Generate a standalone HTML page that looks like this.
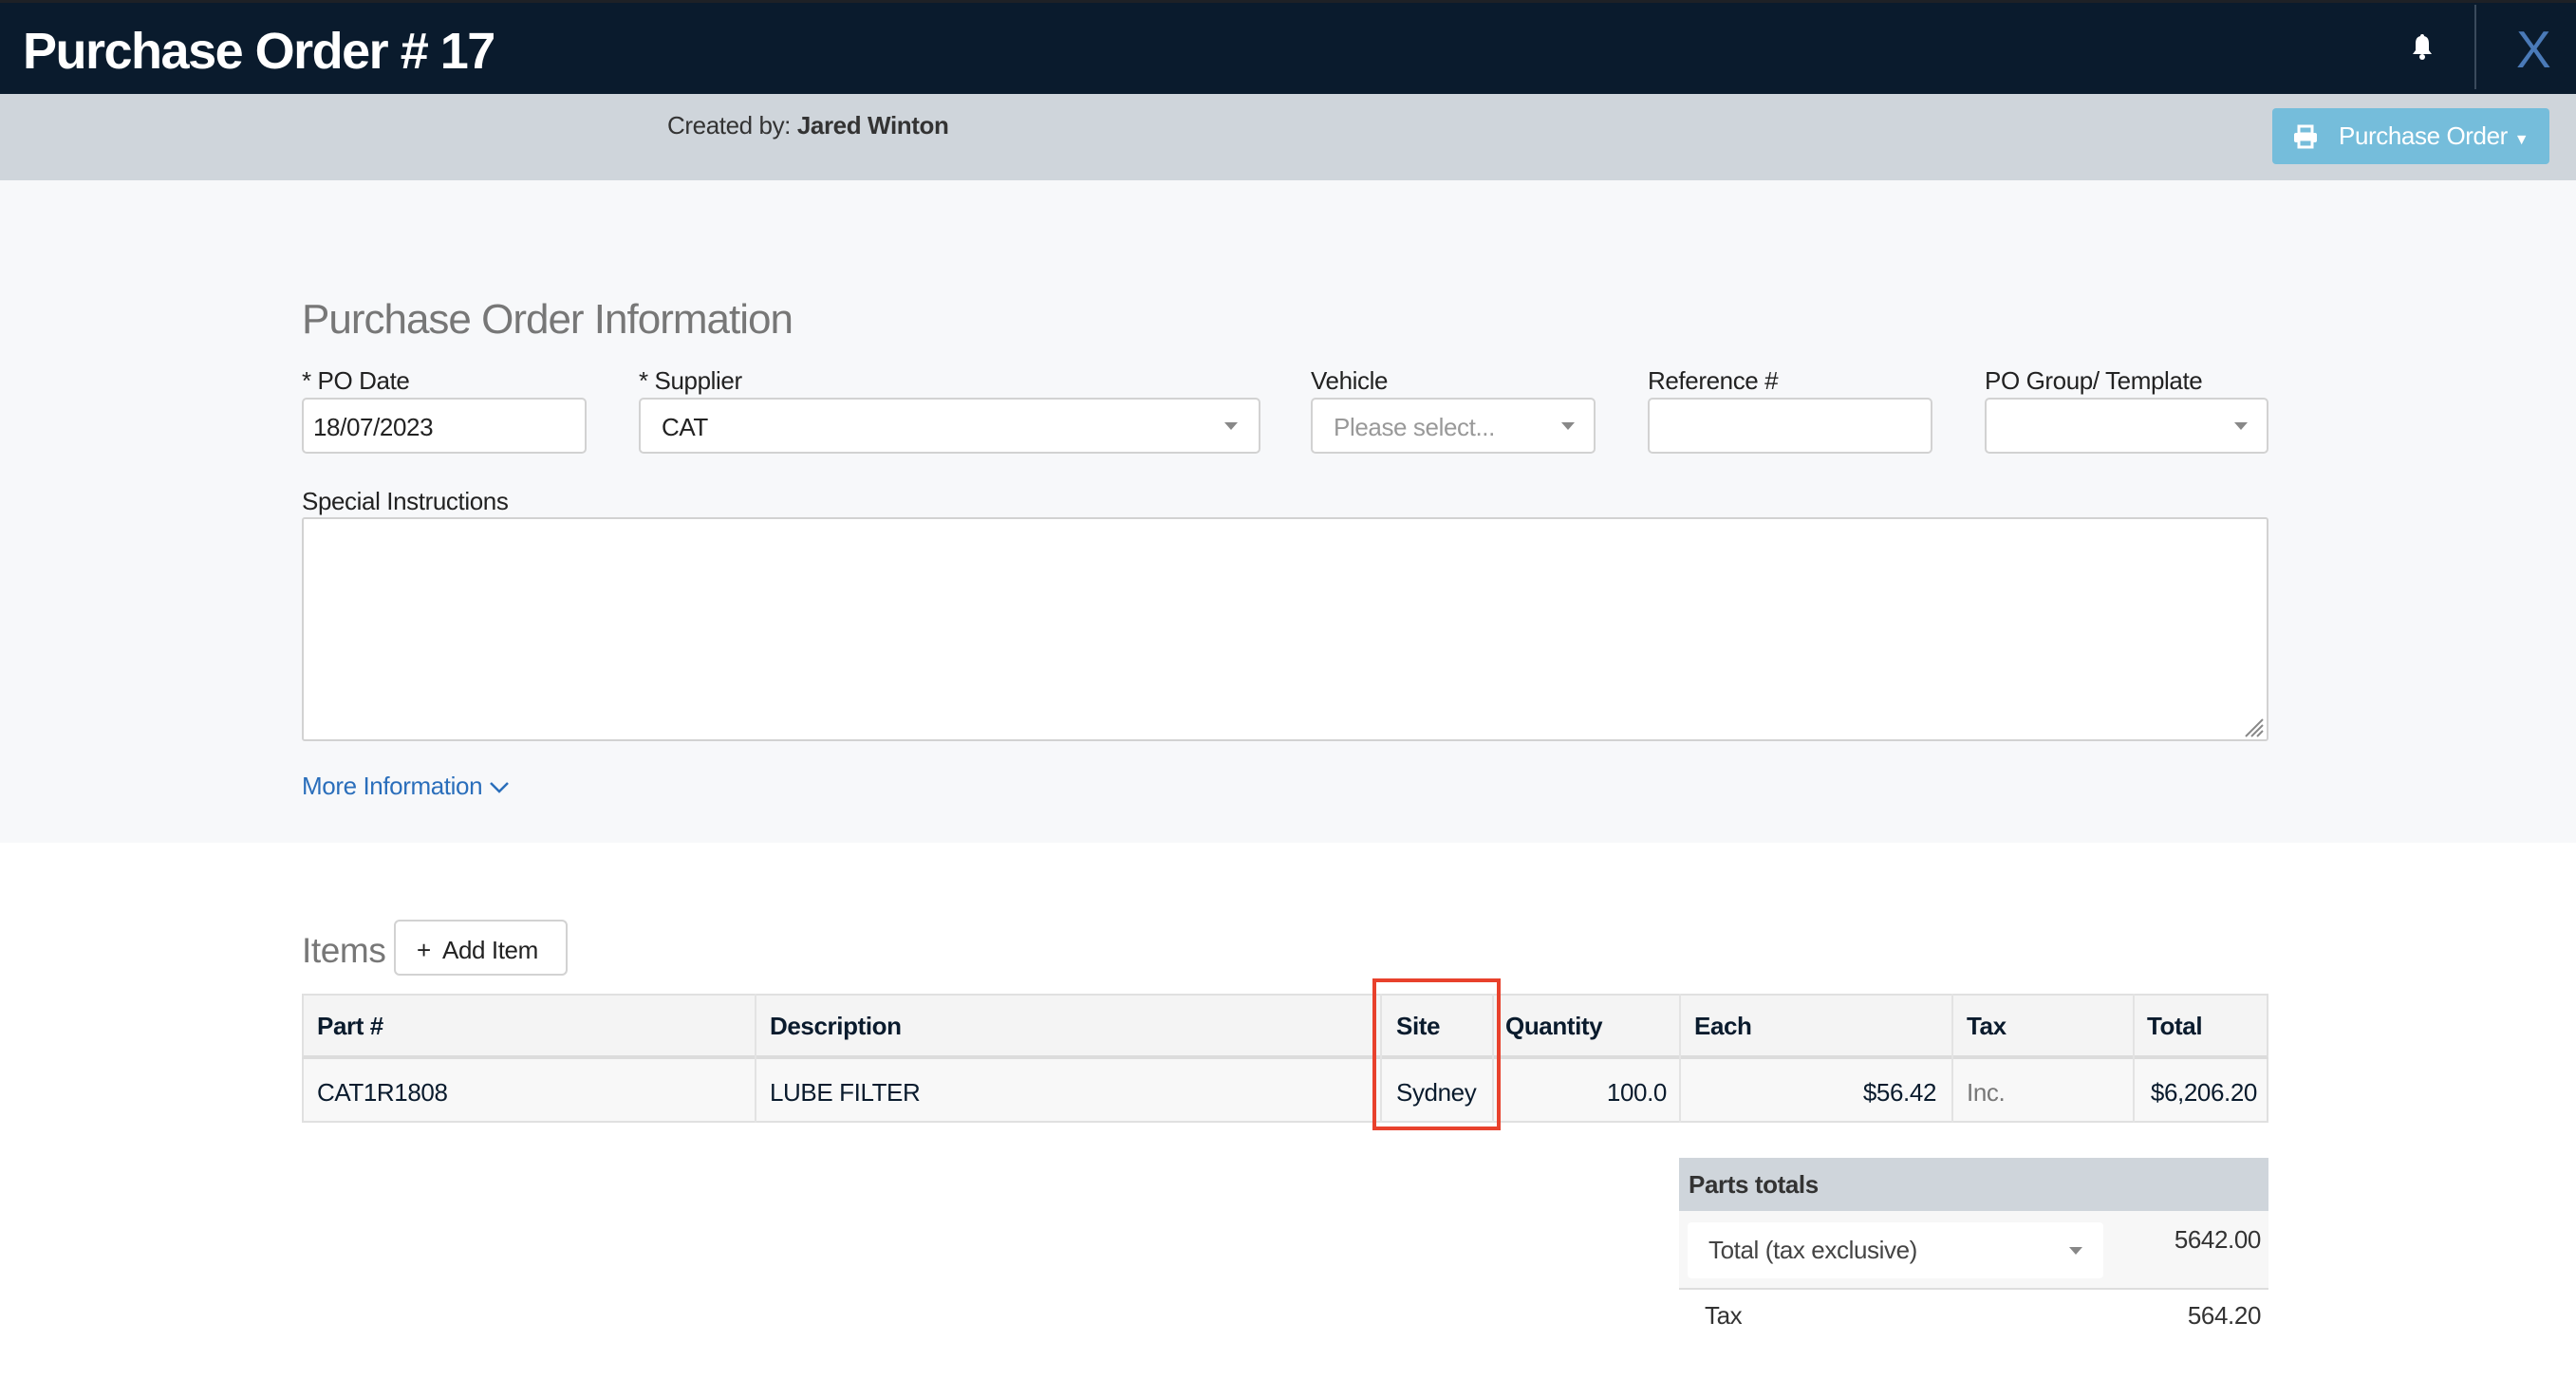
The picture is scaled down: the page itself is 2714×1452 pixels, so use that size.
<!DOCTYPE html>
<html><head><meta charset="utf-8"><style>
*{box-sizing:border-box;margin:0;padding:0}
body{width:2714px;height:1452px;overflow:hidden;font-family:"Liberation Sans",Arial,sans-serif;background:#fff;color:#222;position:relative;letter-spacing:-0.4px}
.a{position:absolute}
.hdr{left:0;top:0;width:2714px;height:99px;background:#0a1b2d;border-top:3px solid #1e2126}
.t{font-size:26px}
.inp{background:#fff;border:2px solid #d2d2d2;border-radius:5px}
.car{width:0;height:0;border-left:7px solid transparent;border-right:7px solid transparent;border-top:8px solid #888}
.th{font-weight:bold;color:#0a1b2d;font-size:26px}
.td{color:#0a1b2d;font-size:26px}
</style></head><body>
<div class="a hdr"></div>
<div class="a" style="left:24px;top:23px;font-size:54px;font-weight:bold;color:#fff;letter-spacing:-1.5px">Purchase Order # 17</div>
<svg class="a" style="left:2540px;top:34px" width="24" height="30" viewBox="0 0 24 30"><path d="M12 2c-1.5 0-2 1-2 2C6 5 5 8 5 12v7l-3 4h20l-3-4v-7c0-4-1-7-5-8 0-1-.5-2-2-2z" fill="#fff"/><circle cx="12" cy="26" r="3" fill="#fff"/></svg>
<div class="a" style="left:2607px;top:5px;width:2px;height:89px;background:#3a4a5c"></div>
<div class="a" style="left:2651px;top:20px;font-size:55px;color:#4a7ab8">X</div>
<div class="a" style="left:0;top:99px;width:2714px;height:91px;background:#cfd5db"></div>
<div class="a t" style="left:703px;top:117px;color:#333">Created by: <b>Jared Winton</b></div>
<div class="a" style="left:2394px;top:114px;width:292px;height:59px;background:#75bddb;border-radius:4px;color:#fff;font-size:26px;line-height:59px;padding-left:70px">Purchase Order <span style="font-size:16px">▼</span></div>
<svg class="a" style="left:2416px;top:131px" width="26" height="26" viewBox="0 0 26 26"><rect x="6" y="2" width="14" height="8" fill="none" stroke="#fff" stroke-width="3"/><rect x="1" y="9" width="24" height="10" rx="2" fill="#fff"/><rect x="6" y="16" width="14" height="8" fill="#75bddb" stroke="#fff" stroke-width="3"/></svg>
<div class="a" style="left:0;top:190px;width:2714px;height:698px;background:#f7f8fa"></div>
<div class="a" style="left:318px;top:312px;font-size:44px;color:#777;letter-spacing:-1px">Purchase Order Information</div>
<div class="a t" style="left:318px;top:386px">* PO Date</div>
<div class="a t" style="left:673px;top:386px">* Supplier</div>
<div class="a t" style="left:1381px;top:386px">Vehicle</div>
<div class="a t" style="left:1736px;top:386px">Reference #</div>
<div class="a t" style="left:2091px;top:386px">PO Group/ Template</div>
<div class="a inp t" style="left:318px;top:419px;width:300px;height:59px;padding:14px 10px">18/07/2023</div>
<div class="a inp t" style="left:673px;top:419px;width:655px;height:59px;padding:14px 22px">CAT</div>
<div class="a car" style="left:1290px;top:445px"></div>
<div class="a inp t" style="left:1381px;top:419px;width:300px;height:59px;padding:14px 22px;color:#999">Please select...</div>
<div class="a car" style="left:1645px;top:445px"></div>
<div class="a inp" style="left:1736px;top:419px;width:300px;height:59px"></div>
<div class="a inp" style="left:2091px;top:419px;width:299px;height:59px"></div>
<div class="a car" style="left:2354px;top:445px"></div>
<div class="a t" style="left:318px;top:513px">Special Instructions</div>
<div class="a inp" style="left:318px;top:545px;width:2072px;height:236px;border-radius:3px"></div>
<svg class="a" style="left:2362px;top:754px" width="24" height="24"><path d="M4 22L22 4M10 22L22 10M16 22L22 16" stroke="#888" stroke-width="2"/></svg>
<div class="a t" style="left:318px;top:813px;color:#2a6ebb">More Information <svg width="22" height="14" viewBox="0 0 22 14"><path d="M2 2l9 9 9-9" fill="none" stroke="#2a6ebb" stroke-width="2.5"/></svg></div>
<div class="a" style="left:318px;top:981px;font-size:37px;color:#777">Items</div>
<div class="a inp t" style="left:415px;top:969px;width:183px;height:59px;padding:15px 0 0 22px;border-radius:6px">+&nbsp; Add Item</div>
<div class="a" style="left:318px;top:1047px;width:2072px;height:69px;background:#f4f4f4;border:2px solid #e0e0e0;border-bottom:4px solid #dcdcdc"></div>
<div class="a" style="left:318px;top:1116px;width:2072px;height:67px;background:#f8f8f8;border:2px solid #e0e0e0;border-top:none"></div>
<div class="a" style="left:795px;top:1047px;width:2px;height:136px;background:#e3e3e3"></div>
<div class="a" style="left:1454px;top:1047px;width:2px;height:136px;background:#e3e3e3"></div>
<div class="a" style="left:1572px;top:1047px;width:2px;height:136px;background:#e3e3e3"></div>
<div class="a" style="left:1769px;top:1047px;width:2px;height:136px;background:#e3e3e3"></div>
<div class="a" style="left:2056px;top:1047px;width:2px;height:136px;background:#e3e3e3"></div>
<div class="a" style="left:2247px;top:1047px;width:2px;height:136px;background:#e3e3e3"></div>
<div class="a th" style="left:334px;top:1066px">Part #</div>
<div class="a th" style="left:811px;top:1066px">Description</div>
<div class="a th" style="left:1471px;top:1066px">Site</div>
<div class="a th" style="left:1586px;top:1066px">Quantity</div>
<div class="a th" style="left:1785px;top:1066px">Each</div>
<div class="a th" style="left:2072px;top:1066px">Tax</div>
<div class="a th" style="left:2262px;top:1066px">Total</div>
<div class="a td" style="left:334px;top:1136px">CAT1R1808</div>
<div class="a td" style="left:811px;top:1136px">LUBE FILTER</div>
<div class="a td" style="left:1471px;top:1136px">Sydney</div>
<div class="a td" style="left:1600px;top:1136px;width:156px;text-align:right">100.0</div>
<div class="a td" style="left:1780px;top:1136px;width:260px;text-align:right">$56.42</div>
<div class="a td" style="left:2072px;top:1136px;color:#777">Inc.</div>
<div class="a td" style="left:2250px;top:1136px;width:128px;text-align:right">$6,206.20</div>
<div class="a" style="left:1446px;top:1031px;width:135px;height:160px;border:4px solid #e8412c"></div>
<div class="a" style="left:1769px;top:1220px;width:621px;height:56px;background:#cfd5db"></div>
<div class="a t" style="left:1779px;top:1233px;font-weight:bold;color:#333">Parts totals</div>
<div class="a" style="left:1769px;top:1276px;width:621px;height:83px;background:#f7f7f7;border-bottom:2px solid #ddd"></div>
<div class="a t" style="left:1778px;top:1288px;width:438px;height:59px;background:#fff;border-radius:4px;padding:14px 22px;color:#444">Total (tax exclusive)</div>
<div class="a car" style="left:2180px;top:1314px"></div>
<div class="a t" style="left:2250px;top:1291px;width:132px;text-align:right;color:#333">5642.00</div>
<div class="a t" style="left:1796px;top:1371px;color:#333">Tax</div>
<div class="a t" style="left:2250px;top:1371px;width:132px;text-align:right;color:#333">564.20</div>
</body></html>
